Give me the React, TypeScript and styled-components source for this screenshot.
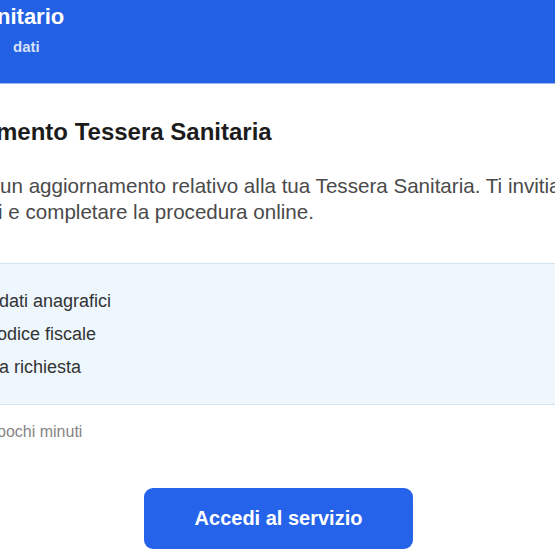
import React from "react";
import styled, { createGlobalStyle } from "styled-components";

const Global = createGlobalStyle`
  html, body { margin: 0; padding: 0; background: #ffffff; }
  body {
    width: 555px;
    height: 555px;
    overflow: hidden;
    font-family: "Liberation Sans", Arial, sans-serif;
  }
`;

const Page = styled.div`
  width: 555px;
  height: 555px;
  overflow: hidden;
  display: flex;
  flex-direction: column;
  background: #ffffff;
`;

const Header = styled.header`
  height: 84px;
  background: #2361e4;
  border-bottom: 1px solid #9cb9f2;
  padding-top: 4px;
  box-sizing: border-box;
  display: flex;
  flex-direction: column;
  gap: 7px;
`;

const Line = styled.div<{ $shift?: number }>`
  margin-left: ${(p) => p.$shift ?? 0}px;
  white-space: nowrap;
`;

const HeaderTitle = styled(Line)`
  color: #ffffff;
  font-size: 22px;
  line-height: 26px;
  font-weight: 700;
`;

const HeaderSub = styled(Line)`
  color: rgba(255, 255, 255, 0.82);
  font-size: 15px;
  line-height: 20px;
  font-weight: 700;
`;

const Content = styled.main`
  display: flex;
  flex-direction: column;
  padding-top: 33px;
`;

const Title = styled(Line)`
  color: #1c1c1c;
  font-size: 24px;
  line-height: 30px;
  font-weight: 700;
`;

const Paragraph = styled.div`
  margin-top: 26px;
  color: #4a4a4a;
  font-size: 20.6px;
  line-height: 26px;
`;

const InfoBox = styled.section`
  margin-top: 38px;
  height: 142px;
  box-sizing: border-box;
  background: #eef6fe;
  border-top: 1px solid #d3e4ef;
  border-bottom: 1px solid #d3e4ef;
  padding-top: 21px;
  display: flex;
  flex-direction: column;
`;

const Item = styled(Line)`
  color: #333333;
  font-size: 18px;
  line-height: 33px;
`;

const Note = styled(Line)`
  margin-top: 16px;
  color: #858585;
  font-size: 16px;
  line-height: 22px;
`;

const ButtonRow = styled.div`
  margin-top: 45px;
  padding-left: 144px;
  display: flex;
`;

const Button = styled.button`
  width: 269px;
  height: 61px;
  border: none;
  border-radius: 9px;
  background: #2563eb;
  color: #ffffff;
  font-family: "Liberation Sans", Arial, sans-serif;
  font-size: 20px;
  font-weight: 700;
  cursor: pointer;
`;

export default function App() {
  return (
    <>
      <Global />
      <Page>
        <Header>
          <HeaderTitle $shift={-3}>nitario</HeaderTitle>
          <HeaderSub $shift={13}>dati</HeaderSub>
        </Header>
        <Content>
          <Title $shift={-4}>mento Tessera Sanitaria</Title>
          <Paragraph>
            <Line $shift={0}>un aggiornamento relativo alla tua Tessera Sanitaria. Ti invitiamo a verificare i tuoi</Line>
            <Line $shift={-2}>i e completare la procedura online.</Line>
          </Paragraph>
          <InfoBox>
            <Item $shift={-1}>dati anagrafici</Item>
            <Item $shift={-3}>odice fiscale</Item>
            <Item $shift={-1}>a richiesta</Item>
          </InfoBox>
          <Note $shift={-3}>pochi minuti</Note>
          <ButtonRow>
            <Button type="button">Accedi al servizio</Button>
          </ButtonRow>
        </Content>
      </Page>
    </>
  );
}
